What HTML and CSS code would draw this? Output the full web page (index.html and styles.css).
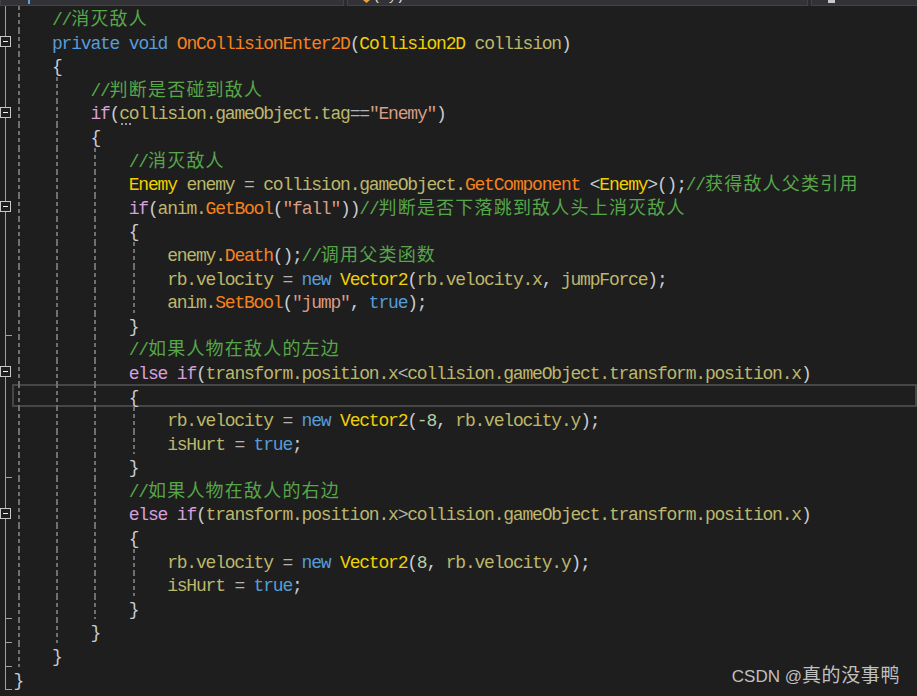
FILE: index.html
```html
<!DOCTYPE html>
<html lang="zh-CN">

<head>
    <meta charset="UTF-8" />
    <meta name="viewport" content="width=device-width, initial-scale=1.0" />
    <title>PlayerController.cs</title>
    <link rel="stylesheet" href="styles.css">
</head>

<body>
    <div class="topbar">
        <div class="nav-box nav-type"><span class="nav-mark"></span></div>
        <div class="nav-box nav-member"><span class="nav-diamond"></span><span class="nav-text">( y)</span></div>
        <div class="nav-box nav-extra"><span class="nav-icon"></span></div>
    </div>

    <div class="editor">
        <div class="row"><div class="gutter"></div><div class="code"><i class="ind"></i><span class="c">//<span class="h">消灭敌人</span></span></div></div>
        <div class="row"><div class="gutter"><span class="fold"></span></div><div class="code"><i class="ind"></i><span class="k">private</span> <span class="k">void</span> <span class="m">OnCollisionEnter2D</span>(<span class="t">Collision2D</span> <span class="v">collision</span>)</div></div>
        <div class="row"><div class="gutter"></div><div class="code"><i class="ind"></i>{</div></div>
        <div class="row"><div class="gutter"></div><div class="code"><i class="ind"></i><i class="ind"></i><span class="c">//<span class="h">判断是否碰到敌人</span></span></div></div>
        <div class="row"><div class="gutter"><span class="fold"></span></div><div class="code"><i class="ind"></i><i class="ind"></i><span class="f">if</span>(<span class="v"><span class="dots">co</span>llision.gameObject.tag</span><span class="o">==</span><span class="s">"Enemy"</span>)</div></div>
        <div class="row"><div class="gutter"></div><div class="code"><i class="ind"></i><i class="ind"></i>{</div></div>
        <div class="row"><div class="gutter"></div><div class="code"><i class="ind"></i><i class="ind"></i><i class="ind"></i><span class="c">//<span class="h">消灭敌人</span></span></div></div>
        <div class="row"><div class="gutter"></div><div class="code"><i class="ind"></i><i class="ind"></i><i class="ind"></i><span class="t">Enemy</span> <span class="v">enemy</span> <span class="o">=</span> <span class="v">collision.gameObject.</span><span class="m">GetComponent</span> &lt;<span class="t">Enemy</span>&gt;();<span class="c">//<span class="h">获得敌人父类引用</span></span></div></div>
        <div class="row"><div class="gutter"><span class="fold"></span></div><div class="code"><i class="ind"></i><i class="ind"></i><i class="ind"></i><span class="f">if</span>(<span class="v">anim.</span><span class="m">GetBool</span>(<span class="s">"fall"</span>))<span class="c">//<span class="h">判断是否下落跳到敌人头上消灭敌人</span></span></div></div>
        <div class="row"><div class="gutter"></div><div class="code"><i class="ind"></i><i class="ind"></i><i class="ind"></i>{</div></div>
        <div class="row"><div class="gutter"></div><div class="code"><i class="ind"></i><i class="ind"></i><i class="ind"></i><i class="ind"></i><span class="v">enemy.</span><span class="m">Death</span>();<span class="c">//<span class="h">调用父类函数</span></span></div></div>
        <div class="row"><div class="gutter"></div><div class="code"><i class="ind"></i><i class="ind"></i><i class="ind"></i><i class="ind"></i><span class="v">rb.velocity</span> <span class="o">=</span> <span class="k">new</span> <span class="t">Vector2</span>(<span class="v">rb.velocity.x</span>, <span class="v">jumpForce</span>);</div></div>
        <div class="row"><div class="gutter"></div><div class="code"><i class="ind"></i><i class="ind"></i><i class="ind"></i><i class="ind"></i><span class="v">anim.</span><span class="m">SetBool</span>(<span class="s">"jump"</span>, <span class="k">true</span>);</div></div>
        <div class="row"><div class="gutter end"></div><div class="code"><i class="ind"></i><i class="ind"></i><i class="ind"></i>}</div></div>
        <div class="row"><div class="gutter"></div><div class="code"><i class="ind"></i><i class="ind"></i><i class="ind"></i><span class="c">//<span class="h">如果人物在敌人的左边</span></span></div></div>
        <div class="row"><div class="gutter"><span class="fold"></span></div><div class="code"><i class="ind"></i><i class="ind"></i><i class="ind"></i><span class="f">else if</span>(<span class="v">transform.position.x</span><span class="o">&lt;</span><span class="v">collision.gameObject.transform.position.x</span>)</div></div>
        <div class="row current"><div class="gutter"></div><div class="code"><i class="ind"></i><i class="ind"></i><i class="ind"></i>{</div></div>
        <div class="row"><div class="gutter"></div><div class="code"><i class="ind"></i><i class="ind"></i><i class="ind"></i><i class="ind"></i><span class="v">rb.velocity</span> <span class="o">=</span> <span class="k">new</span> <span class="t">Vector2</span>(<span class="n">-8</span>, <span class="v">rb.velocity.y</span>);</div></div>
        <div class="row"><div class="gutter"></div><div class="code"><i class="ind"></i><i class="ind"></i><i class="ind"></i><i class="ind"></i><span class="v">isHurt</span> <span class="o">=</span> <span class="k">true</span>;</div></div>
        <div class="row"><div class="gutter end"></div><div class="code"><i class="ind"></i><i class="ind"></i><i class="ind"></i>}</div></div>
        <div class="row"><div class="gutter"></div><div class="code"><i class="ind"></i><i class="ind"></i><i class="ind"></i><span class="c">//<span class="h">如果人物在敌人的右边</span></span></div></div>
        <div class="row"><div class="gutter"><span class="fold"></span></div><div class="code"><i class="ind"></i><i class="ind"></i><i class="ind"></i><span class="f">else if</span>(<span class="v">transform.position.x</span><span class="o">&gt;</span><span class="v">collision.gameObject.transform.position.x</span>)</div></div>
        <div class="row"><div class="gutter"></div><div class="code"><i class="ind"></i><i class="ind"></i><i class="ind"></i>{</div></div>
        <div class="row"><div class="gutter"></div><div class="code"><i class="ind"></i><i class="ind"></i><i class="ind"></i><i class="ind"></i><span class="v">rb.velocity</span> <span class="o">=</span> <span class="k">new</span> <span class="t">Vector2</span>(<span class="n">8</span>, <span class="v">rb.velocity.y</span>);</div></div>
        <div class="row"><div class="gutter"></div><div class="code"><i class="ind"></i><i class="ind"></i><i class="ind"></i><i class="ind"></i><span class="v">isHurt</span> <span class="o">=</span> <span class="k">true</span>;</div></div>
        <div class="row"><div class="gutter end"></div><div class="code"><i class="ind"></i><i class="ind"></i><i class="ind"></i>}</div></div>
        <div class="row"><div class="gutter end"></div><div class="code"><i class="ind"></i><i class="ind"></i>}</div></div>
        <div class="row"><div class="gutter end"></div><div class="code"><i class="ind"></i>}</div></div>
        <div class="row"><div class="gutter end"></div><div class="code">}</div></div>
    </div>

    <div class="watermark">CSDN @<span class="wm-cjk">真的没事鸭</span></div>
</body>

</html>
```

FILE: styles.css
```css
* {
    box-sizing: border-box;
}

body {
    margin: 0;
    width: 917px;
    height: 696px;
    overflow: hidden;
    position: relative;
    background-color: #1e1e1e;
}

/* navigation bar, only its lower edge is visible */
.topbar {
    display: flex;
    gap: 3px;
    height: 6px;
    background-color: #2d2d30;
}

.nav-box {
    display: flex;
    align-items: flex-start;
    height: 6px;
    background-color: #333337;
    border: 1px solid #434346;
    border-top: none;
    overflow: hidden;
}

.nav-type {
    width: 344px;
    padding-left: 27px;
}

.nav-member {
    width: 461px;
    padding-left: 15px;
    gap: 3px;
}

.nav-extra {
    flex: 1;
    padding-left: 16px;
    margin-right: -2px;
}

.nav-mark {
    width: 2px;
    height: 4px;
    background-color: #5aa0e6;
}

.nav-diamond {
    width: 7px;
    height: 3px;
    background-color: #e8a33c;
    clip-path: polygon(0 0, 100% 0, 50% 100%);
}

.nav-text {
    font-family: "Liberation Mono", monospace;
    font-size: 13px;
    line-height: 13px;
    margin-top: -10px;
    color: #e0e0e0;
    white-space: pre;
}

.nav-icon {
    width: 7px;
    height: 3px;
    background-color: #c8c8c8;
}

/* code editor */
.editor {
    font-family: "Liberation Mono", "Noto Sans CJK SC", monospace;
    font-size: 18px;
    letter-spacing: -1.2px;
    color: #c8ccd4;
}

.row {
    display: flex;
    height: 23.6px;
}

.gutter {
    width: 12px;
    flex-shrink: 0;
    display: flex;
    align-items: center;
    background: linear-gradient(#a0a0a0, #a0a0a0) 5px 0 / 1px 100% no-repeat;
}

.gutter.end {
    background:
        linear-gradient(#a0a0a0, #a0a0a0) 5px 0 / 1px 100% no-repeat,
        linear-gradient(#a0a0a0, #a0a0a0) 5px 100% / 7px 1px no-repeat;
}

.fold {
    width: 11px;
    height: 11px;
    border: 1px solid #c8c8c8;
    background-color: #1e1e1e;
    display: flex;
    align-items: center;
    justify-content: center;
}

.fold::before {
    content: "";
    width: 5px;
    height: 1px;
    background-color: #f0f0f0;
}

.code {
    flex: 1;
    padding-left: 1.6px;
    line-height: 28px;
    white-space: pre;
}

.row.current .code {
    box-shadow: inset 0 0 0 2px #464646;
}

.ind {
    display: inline-block;
    width: 38.4px;
    height: 23.6px;
    vertical-align: top;
    background: linear-gradient(#707070 0 4px, transparent 4px 7px) 4px 0 / 2px 7px repeat-y;
}

.h {
    font-family: "Noto Sans CJK SC", sans-serif;
    letter-spacing: 1.2px;
    line-height: 1;
}

.c { color: #57a64a; }
.k { color: #569cd6; }
.f { color: #d8a0df; }
.m { color: #f5821f; }
.t { color: #f0d000; }
.v { color: #bdb76b; }
.s { color: #d69d85; }
.n { color: #b5cea8; }
.o { color: #b4b4b4; }

.dots {
    position: relative;
}

.dots::after {
    content: "";
    position: absolute;
    left: 2px;
    bottom: -1px;
    width: 10px;
    height: 2px;
    background: repeating-linear-gradient(to right, #9a9a9a 0 2px, transparent 2px 4px);
}

.watermark {
    position: absolute;
    right: 17px;
    top: 662px;
    font-family: "Liberation Sans", sans-serif;
    font-size: 17px;
    line-height: 24px;
    color: #c0c0c0;
}

.wm-cjk {
    font-family: "Noto Sans CJK SC", sans-serif;
    font-size: 19px;
    letter-spacing: 0.6px;
}
```
